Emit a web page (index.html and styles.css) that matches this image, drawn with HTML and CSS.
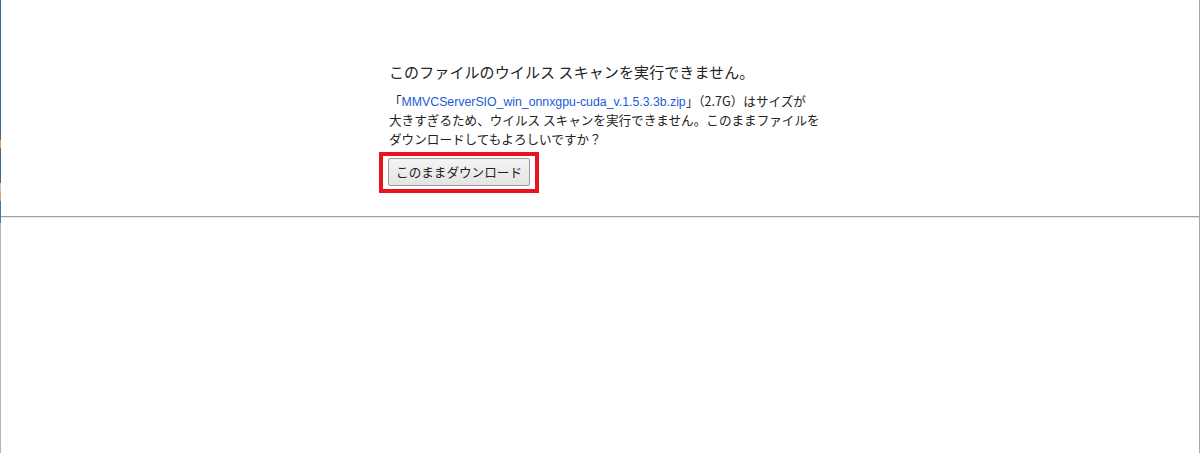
FILE: index.html
```html
<!DOCTYPE html>
<html lang="ja">
<head>
<meta charset="utf-8">
<link rel="stylesheet" href="styles.css">
</head>
<body>
<div class="frame">
  <div class="edge">
    <span class="e1"></span><span class="e2"></span><span class="e1b"></span><span class="e3"></span><span class="e4"></span><span class="e5"></span><span class="e6"></span>
  </div>
  <div class="page">
    <div class="top">
      <div class="box">
        <h1 class="title">このファイルのウイルス スキャンを実行できません。</h1>
        <p class="msg"><span class="line">「<a class="link" href="#">MMVCServerSIO_win_onnxgpu-cuda_v.1.5.3.3b.zip</a>」（2.7G）はサイズが</span><span class="line">大きすぎるため、ウイルス スキャンを実行できません。このままファイルを</span><span class="line">ダウンロードしてもよろしいですか？</span></p>
        <div class="hl">
          <button class="btn">このままダウンロード</button>
        </div>
      </div>
    </div>
    <div class="bottom"></div>
  </div>
</div>
</body>
</html>
```
FILE: styles.css
```css
html, body {
  margin: 0;
  padding: 0;
  background: #fff;
}
body {
  width: 1200px;
  height: 453px;
  overflow: hidden;
  font-family: "Noto Sans CJK JP", "Liberation Sans", sans-serif;
}
.frame {
  display: flex;
  height: 453px;
}
.edge {
  width: 1px;
  display: flex;
  flex-direction: column;
}
.edge span { display: block; width: 1px; }
.edge .e1 { height: 140px; background: #3f6a8e; }
.edge .e1b { height: 35px; background: #3f6a8e; }
.edge .e2 { height: 8px; background: #d9a46a; }
.edge .e3 { height: 8px; background: #c8c8c8; }
.edge .e4 { height: 10px; background: #d9a46a; }
.edge .e5 { height: 22px; background: #3a78b8; }
.edge .e6 { flex: 1; background: #b4b4b4; }
.page {
  flex: 1;
  display: flex;
  flex-direction: column;
  border-right: 1px solid #a6a6a6;
}
.top {
  height: 216px;
  border-bottom: 1px solid #a0a0a0;
  display: flex;
  justify-content: center;
}
.bottom {
  flex: 1;
  border-top: 1px solid #e6e6e6;
}
.box {
  width: 430px;
  padding-top: 59px;
  margin-left: 8px;
}
.title {
  margin: 0;
  font-size: 15px;
  font-weight: normal;
  color: #222;
  line-height: 26px;
  letter-spacing: 0.1px;
}
.msg {
  margin: 6px 0 0;
  font-size: 12.6px;
  color: #222;
}
.line {
  display: block;
  height: 19px;
  line-height: 19px;
  white-space: nowrap;
}
.link {
  color: #1a5bd6;
  text-decoration: none;
  font-family: "Liberation Sans", sans-serif;
  font-size: 12.3px;
}
.hl {
  display: inline-block;
  margin-top: 4px;
  margin-left: -10px;
  border: 4px solid #e5141f;
  padding: 2px 5px 3px;
}
.btn {
  display: block;
  font-family: "Noto Sans CJK JP", sans-serif;
  font-size: 12.6px;
  color: #222;
  background: linear-gradient(#f4f4f4, #e4e4e4);
  border: 1px solid #9a9a9a;
  border-radius: 2px;
  height: 28px;
  width: 142px;
  padding: 0;
  line-height: 26px;
}
```
